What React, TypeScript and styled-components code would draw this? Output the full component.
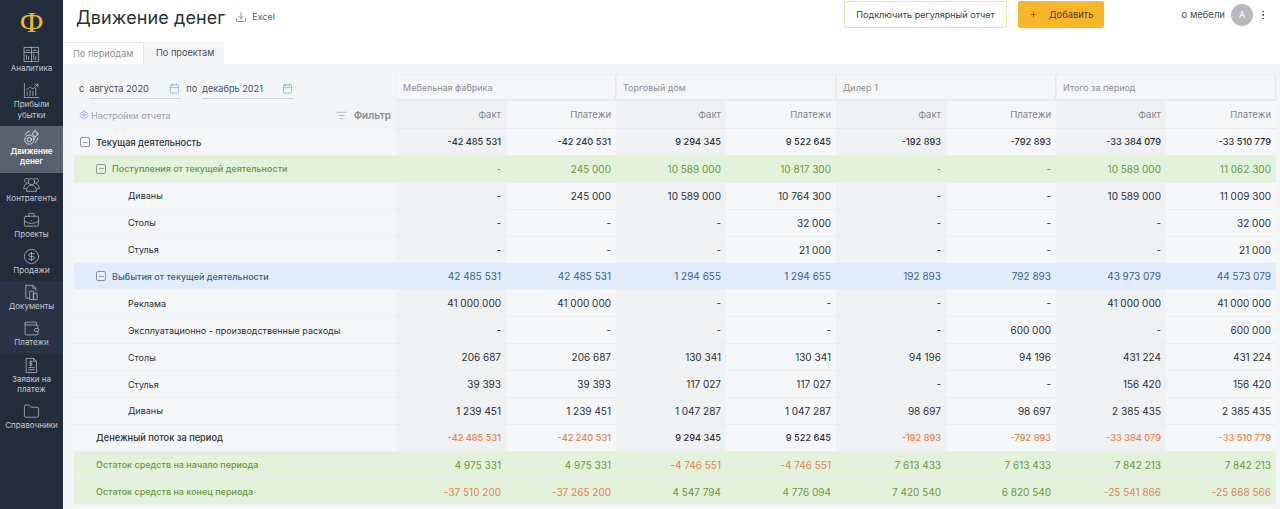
import React from 'react';
import styled, { createGlobalStyle } from 'styled-components';
import {
  BriefcaseBusiness, CircleDollarSign, Wallet,
  Folder, Download, Calendar, Plus, EllipsisVertical, Settings, ListFilter, Minus,
} from 'lucide-react';

const Global = createGlobalStyle`
  html, body { margin: 0; padding: 0; height: 100%; background: #fff; }
  body { font-family: Inter, "Noto Sans", sans-serif; color: #2b2f36; overflow: hidden; }
  #root { height: 100%; }
  * { box-sizing: border-box; }
`;

const Page = styled.div`display: flex; width: 1280px; height: 509px; overflow: hidden;`;
const Sidebar = styled.nav`width: 63px; flex: none; background: #232c3a; display: flex; flex-direction: column;`;
const Logo = styled.div`height: 43px; display: flex; align-items: center; justify-content: center; color: #f5b82e; font: 400 30px "Liberation Serif", serif;`;
const NavItem = styled.div<{ $active?: boolean; $band?: boolean }>`
  display: flex; flex-direction: column; align-items: center; padding: 3px 0 5.7px;
  background: ${p => (p.$active ? '#5a616e' : p.$band ? '#2a3346' : 'transparent')};
  color: ${p => (p.$active ? '#fff' : '#c3c8d0')};
  font-size: 8px; line-height: 10.5px; text-align: center; font-weight: ${p => (p.$active ? 600 : 400)};
  svg { width: 17px; height: 17px; stroke-width: 1; flex: none; }
`;
const Main = styled.div`flex: 1; min-width: 0; display: flex; flex-direction: column;`;
const Header = styled.header`height: 42px; display: flex; align-items: flex-start; padding: 1px 0 0 13px;`;
const Title = styled.h1`margin: 5px 0 0; font-size: 18px; line-height: 24px; font-weight: 400; color: #2b2f36; letter-spacing: .1px;`;
const ExcelLink = styled.span`
  display: flex; align-items: center; gap: 5px; margin: 10px 0 0 10px; font-size: 9px; line-height: 12px; color: #555b64;
  svg { width: 12px; height: 12px; stroke-width: 1.3; }
`;
const Actions = styled.div`margin-left: auto; display: flex; align-items: center;`;
const OutlineButton = styled.button`
  width: 163px; height: 27px; background: #fff; border: 1px solid #f0dfa8; border-radius: 2px;
  font: 400 9.1px Inter, sans-serif; color: #3a3f46; margin-right: 11px;
`;
const AddButton = styled.button`
  width: 86px; height: 27px; border: 0; border-radius: 2px; background: #fbb52b; color: #4a3a14;
  font: 400 9.3px Inter, sans-serif; display: flex; align-items: center; padding: 0 0 0 11px; gap: 11px;
  svg { width: 9px; height: 9px; stroke-width: 1.5; }
`;
const UserName = styled.div`
  width: 44.5px; margin-left: 76.5px; overflow: hidden; display: flex; justify-content: flex-end; white-space: nowrap;
  font-size: 9.5px; color: #4b5058;
`;
const Avatar = styled.div`
  width: 22px; height: 22px; border-radius: 50%; background: #b7b9bc; color: #fff; font-size: 9px;
  display: flex; align-items: center; justify-content: center; margin-left: 6px;
`;
const More = styled.div`
  width: 20px; margin-right: 7px; display: flex; justify-content: center; color: #555;
  svg { width: 12px; height: 12px; }
`;
const Tabs = styled.div`height: 22px; display: flex; flex: none;`;
const Tab = styled.div<{ $active?: boolean }>`
  width: ${p => (p.$active ? 80 : 81)}px; font-size: 9.2px; line-height: 21px; padding-left: ${p => (p.$active ? 12 : 10)}px;
  background: ${p => (p.$active ? '#f4f5f7' : '#fff')}; color: ${p => (p.$active ? '#4b5058' : '#8b9097')};
  border: ${p => (p.$active ? '0' : '1px solid #e4e5e8')}; border-bottom: 0; border-left: 0;
`;
const Content = styled.main`flex: 1; background: #f4f5f7; padding: 10px 3px 0 11px;`;
const Table = styled.div`display: grid; grid-template-columns: 322px repeat(8, 110px); grid-template-rows: 27px 28px;`;
const Controls = styled.div`grid-row: 1 / span 2; display: flex; flex-direction: column; font-size: 9.2px; color: #4b5058;`;
const DateRow = styled.div`display: flex; align-items: center; height: 27px; padding: 2px 0 0 5px;`;
const Label = styled.span`margin-right: 5px;`;
const DateField = styled.div<{ $w: number }>`
  width: ${p => p.$w}px; height: 20px; display: flex; align-items: center; justify-content: space-between; border-bottom: 1px solid #cfd3d9; padding-right: 1px; margin-right: 5px;
  svg { width: 11px; height: 11px; color: #4e9bd6; stroke-width: 1.2; }
`;
const SettingsRow = styled.div`display: flex; justify-content: space-between; align-items: center; height: 28px; padding: 0 5px; color: #9aa0a8;`;
const SettingsLink = styled.span`display: flex; align-items: center; gap: 2px; font-size: 9px; svg { width: 10px; height: 10px; color: #6d8fd6; stroke-width: 1.3; }`;
const FilterLink = styled.span`display: flex; align-items: center; gap: 7px; font-size: 10px; font-weight: 600; color: #878c94; svg { width: 11px; height: 11px; stroke-width: 1.3; }`;
const GroupHead = styled.div`
  grid-column: span 2; font-size: 9px; color: #8b9097; padding-left: 6px; line-height: 26px; background: #f5f6f8;
  border: 1px solid #eceef1; border-right-color: #e6e8eb; border-bottom: 2px solid #e8eaed;
`;
const SubHead = styled.div<{ $alt: boolean; $col?: number }>`
  ${p => (p.$col ? `grid-column: ${p.$col};` : '')}
  font-size: 9.5px; color: #80858d; text-align: right; padding: 0 5px 0 0; line-height: 28px;
  background: ${p => (p.$alt ? '#f6f7f9' : '#f0f1f3')}; border-bottom: 1px solid #e8eaed;
`;
type Tone = 'plain' | 'total' | 'green' | 'blue' | 'flow' | 'rest';
const rowBg: Record<Tone, string> = { plain: '', total: '', flow: '', green: '#e3f3db', blue: '#e2edfb', rest: '#e3f3db' };
const Row = styled.div<{ $tone: Tone }>`
  grid-column: 1 / -1; display: grid; grid-template-columns: subgrid; height: 26.9px; align-items: stretch;
  background: ${p => rowBg[p.$tone] || '#f5f6f8'}; border-bottom: 1px solid #eceef1;
  color: ${p => (p.$tone === 'green' || p.$tone === 'rest' ? '#6c9540' : p.$tone === 'blue' ? '#3d5d92' : '#2b2f36')};
`;
const RowLabel = styled.div<{ $indent: number; $strong: boolean; $medium: boolean }>`
  font-size: ${p => (p.$strong ? 9.25 : 9)}px; font-weight: ${p => (p.$strong || p.$medium ? 500 : 400)};
  display: flex; align-items: center; gap: 6px; padding-left: ${p => p.$indent}px; white-space: nowrap;
`;
const Toggle = styled.span`
  width: 10px; height: 10px; border: 1px solid #8d939b; border-radius: 2px; display: flex; align-items: center; justify-content: center; color: #666c74;
  svg { width: 7px; height: 7px; stroke-width: 2; }
`;
const Num = styled.div<{ $alt: boolean; $tone: Tone; $neg: boolean }>`
  font-size: ${p => (p.$tone === 'total' || p.$tone === 'flow' ? 9.2 : 10)}px;
  font-weight: ${p => (p.$tone === 'total' || p.$tone === 'flow' ? 500 : 400)};
  text-align: right; padding-right: 5px; line-height: 26px; white-space: nowrap;
  background: ${p => (p.$tone === 'green' || p.$tone === 'blue' || p.$tone === 'rest' ? 'transparent' : p.$alt ? '#f6f7f9' : '#f0f1f3')};
  color: ${p => (p.$neg ? '#e8804a' : 'inherit')};
`;

type RowData = { label: string; tone: Tone; indent: number; toggle?: boolean; v: string[] };
const rows: RowData[] = [
  { label: 'Текущая деятельность', tone: 'total', indent: 6, toggle: true, v: ['-42 485 531', '-42 240 531', '9 294 345', '9 522 645', '-192 893', '-792 893', '-33 384 079', '-33 510 779'] },
  { label: 'Поступления от текущей деятельности', tone: 'green', indent: 22, toggle: true, v: ['-', '245 000', '10 589 000', '10 817 300', '-', '-', '10 589 000', '11 062 300'] },
  { label: 'Диваны', tone: 'plain', indent: 54, v: ['-', '245 000', '10 589 000', '10 764 300', '-', '-', '10 589 000', '11 009 300'] },
  { label: 'Столы', tone: 'plain', indent: 54, v: ['-', '-', '-', '32 000', '-', '-', '-', '32 000'] },
  { label: 'Стулья', tone: 'plain', indent: 54, v: ['-', '-', '-', '21 000', '-', '-', '-', '21 000'] },
  { label: 'Выбытия от текущей деятельности', tone: 'blue', indent: 22, toggle: true, v: ['42 485 531', '42 485 531', '1 294 655', '1 294 655', '192 893', '792 893', '43 973 079', '44 573 079'] },
  { label: 'Реклама', tone: 'plain', indent: 54, v: ['41 000 000', '41 000 000', '-', '-', '-', '-', '41 000 000', '41 000 000'] },
  { label: 'Эксплуатационно - производственные расходы', tone: 'plain', indent: 54, v: ['-', '-', '-', '-', '-', '600 000', '-', '600 000'] },
  { label: 'Столы', tone: 'plain', indent: 54, v: ['206 687', '206 687', '130 341', '130 341', '94 196', '94 196', '431 224', '431 224'] },
  { label: 'Стулья', tone: 'plain', indent: 54, v: ['39 393', '39 393', '117 027', '117 027', '-', '-', '156 420', '156 420'] },
  { label: 'Диваны', tone: 'plain', indent: 54, v: ['1 239 451', '1 239 451', '1 047 287', '1 047 287', '98 697', '98 697', '2 385 435', '2 385 435'] },
  { label: 'Денежный поток за период', tone: 'flow', indent: 22, v: ['-42 485 531', '-42 240 531', '9 294 345', '9 522 645', '-192 893', '-792 893', '-33 384 079', '-33 510 779'] },
  { label: 'Остаток средств на начало периода', tone: 'rest', indent: 22, v: ['4 975 331', '4 975 331', '-4 746 551', '-4 746 551', '7 613 433', '7 613 433', '7 842 213', '7 842 213'] },
  { label: 'Остаток средств на конец периода', tone: 'rest', indent: 22, v: ['-37 510 200', '-37 265 200', '4 547 794', '4 776 094', '7 420 540', '6 820 540', '-25 541 866', '-25 668 566'] },
];

const Svg = ({ children }: { children: React.ReactNode }) => (
  <svg viewBox="0 0 24 24" fill="none" stroke="currentColor" strokeLinecap="round" strokeLinejoin="round">{children}</svg>
);
const AnalyticsIcon = () => (
  <Svg>
    <rect x="2" y="2" width="20" height="20" />
    <path d="M2 9h20M12 2v20M5 6h4M15 6h4M5 19v-6M8 19v-4M15 19v-7M18 19v-4" />
  </Svg>
);
const ProfitIcon = () => (
  <Svg>
    <path d="M2 2v20h20M6 19v-5M10 19v-7M14 19v-6M18 19v-10M5 11l5-4 4 3 7-7M17 3h4v4" />
  </Svg>
);
const FlowIcon = () => (
  <Svg>
    <circle cx="9" cy="15" r="6.5" />
    <circle cx="9" cy="15" r="3" />
    <circle cx="17" cy="7" r="3.5" />
    <path d="M3 8a9 9 0 0 1 6-5M21 13a9 9 0 0 1-4 6M17 1v2M17 11v2M22 7h-1" />
  </Svg>
);
const PeopleIcon = () => (
  <Svg>
    <circle cx="12" cy="8" r="4.5" />
    <path d="M5 21c0-5 3-8 7-8s7 3 7 8zM7 10a3.5 3.5 0 1 1 1-6M17 10a3.5 3.5 0 1 0-1-6M4 18H1c0-3 1-6 4-7M20 18h3c0-3-1-6-4-7" />
  </Svg>
);
const DocsIcon = () => (
  <Svg>
    <path d="M4 2h10l4 4v3M4 2v18h5M14 2v4h4" />
    <rect x="10" y="10" width="5" height="12" />
    <rect x="15" y="13" width="5" height="9" />
  </Svg>
);
const RequestIcon = () => (
  <Svg>
    <path d="M5 2h10l4 4v16H5zM15 2v4h4M8 18h8M8 15h8" />
    <path d="M13 6.5h-2.5a1.2 1.2 0 0 0 0 2.5h1a1.2 1.2 0 0 1 0 2.5H9M11 5v8" />
  </Svg>
);

const nav = [
  { Icon: AnalyticsIcon, label: 'Аналитика' },
  { Icon: ProfitIcon, label: 'Прибыли\nубытки' },
  { Icon: FlowIcon, label: 'Движение\nденег', active: true },
  { Icon: PeopleIcon, label: 'Контрагенты' },
  { Icon: BriefcaseBusiness, label: 'Проекты' },
  { Icon: CircleDollarSign, label: 'Продажи' },
  { Icon: DocsIcon, label: 'Документы', band: true },
  { Icon: Wallet, label: 'Платежи', band: true },
  { Icon: RequestIcon, label: 'Заявки на\nплатеж' },
  { Icon: Folder, label: 'Справочники' },
];
const groups = ['Мебельная фабрика', 'Торговый дом', 'Дилер 1', 'Итого за период'];

export default function App() {
  return (
    <Page>
      <Global />
      <Sidebar>
        <Logo>Ф</Logo>
        {nav.map(({ Icon, label, active, band }) => (
          <NavItem key={label} $active={active} $band={band}>
            <Icon />
            {label.split('\n').map(l => <span key={l}>{l}</span>)}
          </NavItem>
        ))}
      </Sidebar>
      <Main>
        <Header>
          <Title>Движение денег</Title>
          <ExcelLink><Download />Excel</ExcelLink>
          <Actions>
            <OutlineButton>Подключить регулярный отчет</OutlineButton>
            <AddButton><Plus />Добавить</AddButton>
            <UserName>по мебели</UserName>
            <Avatar>А</Avatar>
            <More><EllipsisVertical /></More>
          </Actions>
        </Header>
        <Tabs>
          <Tab>По периодам</Tab>
          <Tab $active>По проектам</Tab>
        </Tabs>
        <Content>
          <Table>
            <Controls>
              <DateRow>
                <Label>с</Label>
                <DateField $w={92}>августа 2020<Calendar /></DateField>
                <Label>по</Label>
                <DateField $w={92}>декабрь 2021<Calendar /></DateField>
              </DateRow>
              <SettingsRow>
                <SettingsLink><Settings />Настройки отчета</SettingsLink>
                <FilterLink><ListFilter />Фильтр</FilterLink>
              </SettingsRow>
            </Controls>
            {groups.map(g => <GroupHead key={g}>{g}</GroupHead>)}
            {groups.flatMap((g, i) => [
              <SubHead key={g + 'f'} $alt={false} $col={2 + i * 2}>Факт</SubHead>,
              <SubHead key={g + 'p'} $alt>Платежи</SubHead>,
            ])}
            {rows.map((r, ri) => (
              <Row key={ri} $tone={r.tone}>
                <RowLabel $indent={r.indent} $strong={r.tone === 'total' || r.tone === 'flow'} $medium={r.tone !== 'plain'}>
                  {r.toggle && <Toggle><Minus /></Toggle>}
                  {r.label}
                </RowLabel>
                {r.v.map((n, i) => (
                  <Num key={i} $alt={i % 2 === 1} $tone={r.tone} $neg={n.startsWith('-') && n.length > 1 && r.tone !== 'total'}>{n}</Num>
                ))}
              </Row>
            ))}
          </Table>
        </Content>
      </Main>
    </Page>
  );
}
